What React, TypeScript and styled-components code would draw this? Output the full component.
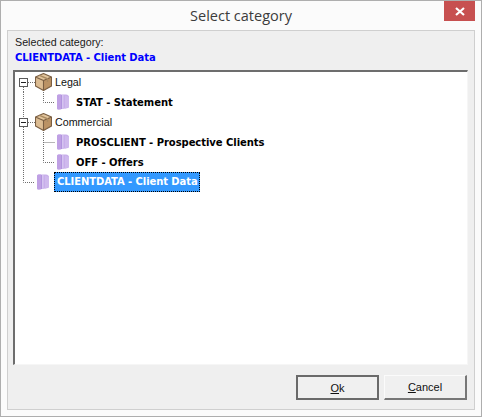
import { createGlobalStyle } from 'styled-components'
import styled from 'styled-components'

const GlobalStyle = createGlobalStyle`
  html, body {
    margin: 0;
    padding: 0;
    background: #fbfbfb;
  }
  * {
    box-sizing: border-box;
  }
`

function BoxIcon() {
  return (
    <IconSvg width="17" height="18" viewBox="0 0 17 18">
      <path d="M8.5 7 L16.5 4 V13 L8.5 17.5 Z" fill="#bb9264" />
      <path d="M8.5 7 L0.5 4 V13 L8.5 17.5 Z" fill="#dcbc92" />
      <path d="M0.5 4 L8.5 0.5 L16.5 4 L8.5 7.5 Z" fill="#e2c59c" />
      <path d="M0.5 4 L8.5 0.5 L16.5 4 V13 L8.5 17.5 L0.5 13 Z M0.5 4 L8.5 7.5 L16.5 4 M8.5 7.5 V17.5" fill="none" stroke="#7a5e42" strokeWidth="1.1" strokeLinejoin="round" />
      <path d="M4.5 2.3 L12.5 5.8 V9" fill="none" stroke="#a98a62" strokeWidth="1.4" />
    </IconSvg>
  )
}

function FolderIcon() {
  return (
    <IconSvg width="14" height="16" viewBox="0 0 14 16">
      <path d="M1 2 Q1 0.5 2.5 0.5 H10 Q13 1 13 3 V13 Q13 14 11 14.3 L3 15.5 Q1 15.7 1 14 Z" fill="#c8aeea" />
      <path d="M1 2 Q1 0.5 2.5 0.5 H5 V15.2 L3 15.5 Q1 15.7 1 14 Z" fill="#bfa0e4" />
      <path d="M5 1 H6 V15 H5 Z" fill="#b294de" />
      <path d="M6 1 H7.5 V14.8 H6 Z" fill="#d5c4f0" />
      <path d="M9 1.5 L13 3 V13 L9 14.4 Z" fill="#cfb9ed" />
    </IconSvg>
  )
}

function Expander() {
  return (
    <ExpanderBox>
      <ExpanderDash />
    </ExpanderBox>
  )
}

function Guides({ width, d }: { width: number; d: string }) {
  return (
    <GuideSvg width={width} height="20" viewBox={`0 0 ${width} 20`}>
      <path d={d} fill="none" stroke="#6e6e6e" strokeWidth="1" strokeDasharray="1 1" />
    </GuideSvg>
  )
}

function App() {
  return (
    <Dialog>
      <GlobalStyle />
      <TitleBar>
        <Title>Select category</Title>
        <CloseButton>
          <svg width="10" height="9" viewBox="0 0 10 9">
            <path d="M1 1 L9 8 M9 1 L1 8" stroke="#fff" strokeWidth="2.2" fill="none" />
          </svg>
        </CloseButton>
      </TitleBar>
      <Panel>
        <Caption>Selected category:</Caption>
        <SelectedValue>CLIENTDATA - Client Data</SelectedValue>
        <Tree>
          <Row>
            <Gutter $width={20}>
              <Guides width={20} d="M13 10.5 H20 M8.5 15 V20" />
              <Expander />
            </Gutter>
            <BoxIcon />
            <NodeLabel>Legal</NodeLabel>
          </Row>
          <Row>
            <Guides width={41} d="M8.5 0 V20 M28.5 0 V10.5 H40" />
            <FolderIcon />
            <LeafLabel>STAT - Statement</LeafLabel>
          </Row>
          <Row>
            <Gutter $width={20}>
              <Guides width={20} d="M8.5 0 V5 M13 10.5 H20 M8.5 15 V20" />
              <Expander />
            </Gutter>
            <BoxIcon />
            <NodeLabel>Commercial</NodeLabel>
          </Row>
          <Row>
            <Guides width={41} d="M8.5 0 V20 M28.5 0 V20 M28.5 10.5 H40" />
            <FolderIcon />
            <LeafLabel>PROSCLIENT - Prospective Clients</LeafLabel>
          </Row>
          <Row>
            <Guides width={41} d="M8.5 0 V20 M28.5 0 V10.5 H40" />
            <FolderIcon />
            <LeafLabel>OFF - Offers</LeafLabel>
          </Row>
          <Row>
            <Guides width={21} d="M8.5 0 V10.5 H20" />
            <FolderIcon />
            <SelectedLabel>CLIENTDATA - Client Data</SelectedLabel>
          </Row>
        </Tree>
        <Footer>
          <DialogButton $primary>
            <u>O</u>k
          </DialogButton>
          <DialogButton>
            <u>C</u>ancel
          </DialogButton>
        </Footer>
      </Panel>
    </Dialog>
  )
}

const Dialog = styled.div`
  width: 482px;
  height: 417px;
  display: flex;
  flex-direction: column;
  padding: 0 6px 6px 6px;
  background: #fbfbfb;
  border: 1px solid #aeaeae;
  font-family: 'Liberation Sans', Arial, sans-serif;
`

const TitleBar = styled.div`
  height: 29px;
  flex: none;
  position: relative;
  display: flex;
  align-items: center;
  justify-content: center;
`

const Title = styled.div`
  font-size: 14.5px;
  color: #3c3c3c;
  font-family: 'Open Sans', 'Liberation Sans', sans-serif;
`

const CloseButton = styled.div`
  position: absolute;
  top: 0;
  right: 0;
  width: 31px;
  height: 20px;
  background: #c75050;
  display: flex;
  align-items: center;
  justify-content: center;
`

const Panel = styled.div`
  flex: 1;
  display: flex;
  flex-direction: column;
  padding: 5px 6px 0 5px;
  background: #efefef;
  border: 1px solid #cfcfcf;
`

const Caption = styled.div`
  height: 13px;
  margin-left: 2px;
  font-size: 10.7px;
  line-height: 13px;
  color: #1a1a1a;
`

const SelectedValue = styled.div`
  height: 21px;
  margin-left: 2px;
  font-size: 10px;
  line-height: 17px;
  letter-spacing: -0.08px;
  font-weight: bold;
  color: #0000ff;
  font-family: 'DejaVu Sans', Verdana, sans-serif;
`

const Tree = styled.div`
  height: 295px;
  display: flex;
  flex-direction: column;
  background: #fff;
  border-style: solid;
  border-width: 2px 1px 1px 2px;
  border-color: #6d6d6d #f6f6f6 #f6f6f6 #6d6d6d;
`

const Row = styled.div`
  height: 20px;
  display: flex;
  align-items: center;
`

const Gutter = styled.div<{ $width: number }>`
  position: relative;
  width: ${({ $width }) => $width}px;
  height: 20px;
  flex: none;
`

const GuideSvg = styled.svg`
  display: block;
  flex: none;
`

const IconSvg = styled.svg`
  display: block;
  flex: none;
`

const ExpanderBox = styled.div`
  position: absolute;
  left: 4px;
  top: 6px;
  width: 9px;
  height: 9px;
  border: 1px solid #5a5a5a;
  background: #fff;
  display: flex;
  align-items: center;
  justify-content: center;
`

const ExpanderDash = styled.div`
  width: 5px;
  height: 1px;
  background: #222;
`

const NodeLabel = styled.span`
  margin-left: 3px;
  font-size: 10.7px;
  color: #111;
`

const LeafLabel = styled.span`
  margin-left: 6px;
  font-size: 10px;
  letter-spacing: -0.05px;
  font-weight: bold;
  color: #000;
  font-family: 'DejaVu Sans', Verdana, sans-serif;
`

const SelectedLabel = styled.span`
  margin-left: 4px;
  height: 20px;
  line-height: 20px;
  padding: 0 2px 0 3px;
  font-size: 10px;
  letter-spacing: -0.08px;
  font-weight: bold;
  color: #fff;
  background: #3399ff;
  outline: 1px dotted #000;
  outline-offset: -1px;
  font-family: 'DejaVu Sans', Verdana, sans-serif;
`

const Footer = styled.div`
  flex: 1;
  display: flex;
  justify-content: flex-end;
  gap: 5px;
  padding: 10px 1px 0 0;
`

const DialogButton = styled.div<{ $primary?: boolean }>`
  width: 83px;
  height: 25px;
  display: flex;
  align-items: center;
  justify-content: center;
  font-size: 11px;
  color: #111;
  background: #f0f0f0;
  border-style: solid;
  border-width: ${({ $primary }) => ($primary ? '2px' : '1px 2px 2px 1px')};
  border-color: ${({ $primary }) =>
    $primary ? '#6a6a6a' : '#fbfbfb #777 #777 #fbfbfb'};
  white-space: pre;
`

export default App
